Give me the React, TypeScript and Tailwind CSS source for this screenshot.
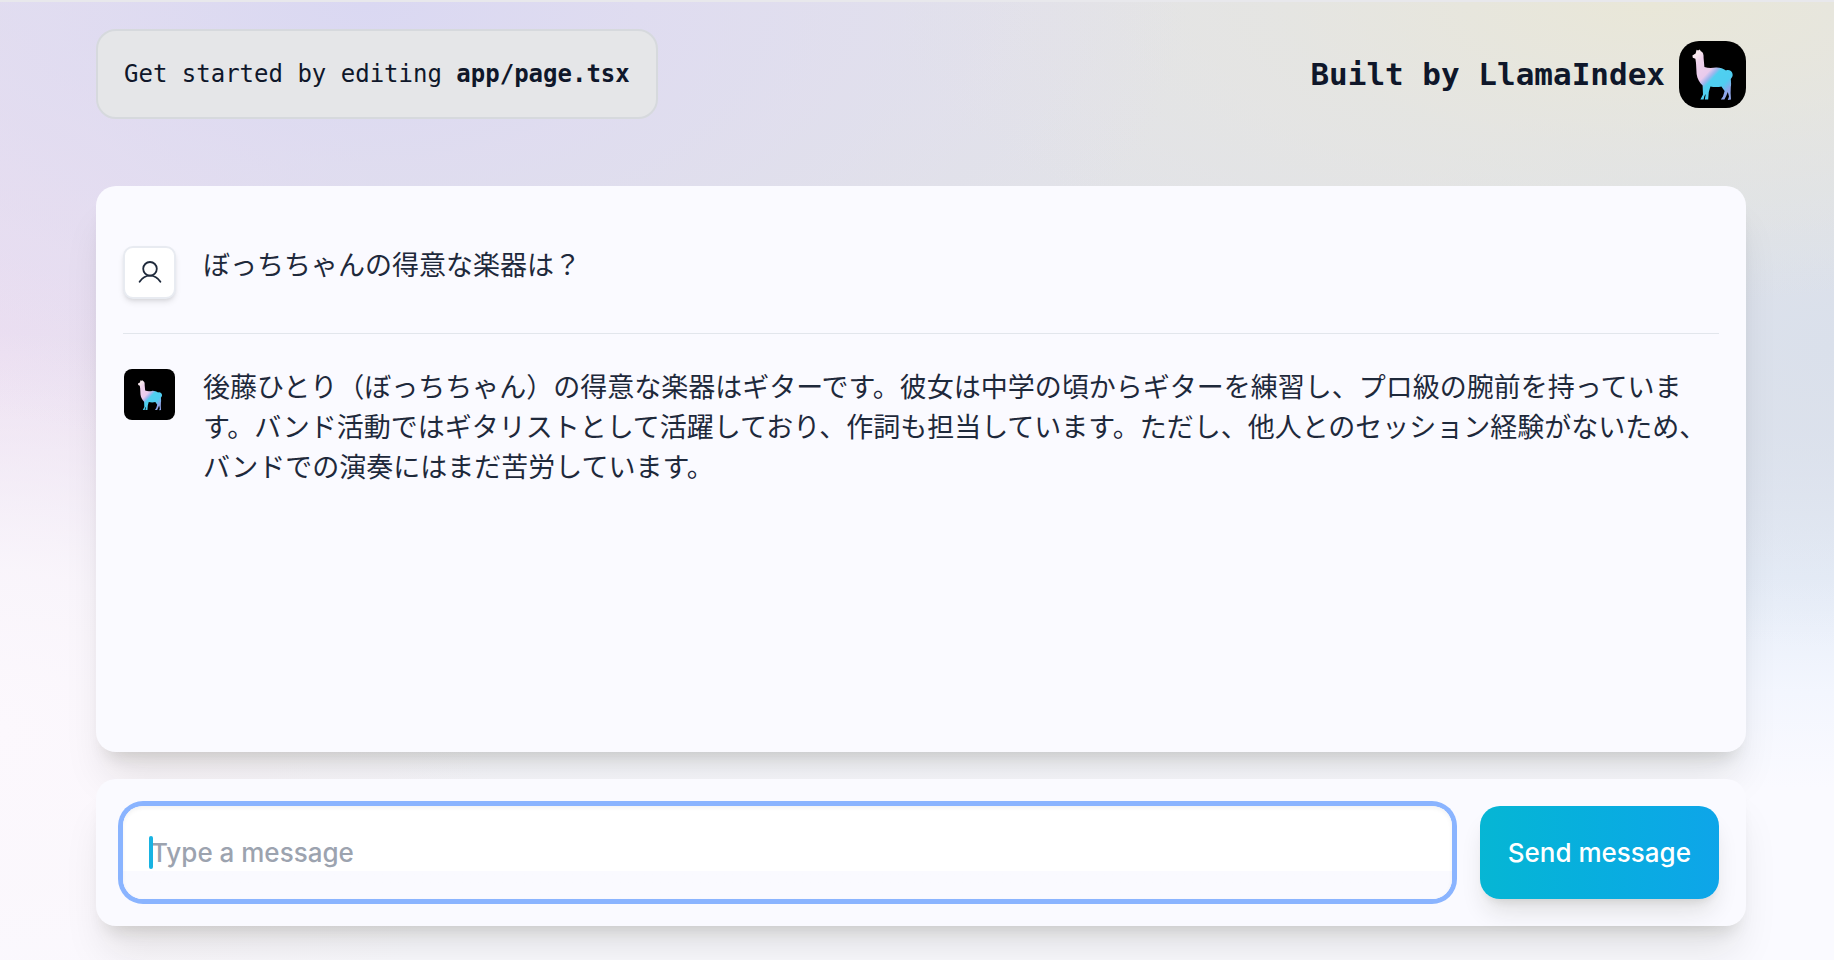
import React from "react";

function Llama({ className }: { className?: string }) {
  const id = React.useId();
  return (
    <svg viewBox="0 0 67 67" className={className} role="img" aria-label="Llama Logo">
      <defs>
        <linearGradient id={id} x1="20" y1="12" x2="54" y2="44" gradientUnits="userSpaceOnUse">
          <stop offset="0" stopColor="#f8e8ee" />
          <stop offset="0.12" stopColor="#efd2ec" />
          <stop offset="0.42" stopColor="#e9caec" />
          <stop offset="0.52" stopColor="#9db6ee" />
          <stop offset="0.59" stopColor="#4fd0f0" />
          <stop offset="0.84" stopColor="#4fcdf0" />
          <stop offset="1" stopColor="#8fa6ea" />
        </linearGradient>
      </defs>
      <rect width="67" height="67" fill="#000" />
      <path
        fill={`url(#${id})`}
        d="M17.6 8.8 L19 9.600 L20.800 8.600 L21.800 10.200 C24 11 24.800 13 24.600 17 L25.400 26 C29 27.400 33 27.200 37 26.600 C41 26.400 44 27.800 47 29.400 C50 28.200 53 30 53.600 33 C54 35.500 52.600 36.500 51.800 38 C52 41 52.400 43.500 51.800 46 L51.600 52 L52 58.600 L48.800 59 L50 55.600 L48.800 51 L47.200 55 L45.400 58.600 L41.800 58.600 L44 55.400 L45.600 50 L42.400 45.400 C39 46.200 34.500 46 31.400 45.400 L29.800 51 L29.200 58.600 L25.800 58.600 L26.800 53 L25.400 55 L24.600 58.600 L21.400 58.600 L24 53.600 L23.600 44.600 C20.600 41.400 18.200 38 17.600 33 L17 22 L16.400 17.800 L13.800 16.800 L13.400 14.400 L16.600 12.400 Z"
      />
    </svg>
  );
}

function UserIcon() {
  return (
    <svg viewBox="0 0 24 24" className="h-6 w-6" fill="none" stroke="#1e293b" strokeWidth="1.8" strokeLinecap="round" aria-hidden="true">
      <circle cx="12" cy="7.8" r="6.8" />
      <path d="M1.600 20.800c2.400-3.800 6-6.200 10.400-6.200s8 2.400 10.400 6.200" />
    </svg>
  );
}

function Header() {
  return (
    <header className="flex items-center justify-between">
      <p className="rounded-[20px] border-2 border-[#d6d9dd] bg-[#e5e6e8] px-[26px] py-[26px] text-[24px] leading-[34px]">
        Get started by editing&nbsp;<code className="font-[inherit] font-bold">app/page.tsx</code>
      </p>
      <a href="#" className="flex items-center gap-[14px] text-[31px] leading-[40px] font-bold">
        <span>Built by LlamaIndex</span>
        <Llama className="h-[67px] w-[67px] rounded-[20px]" />
      </a>
    </header>
  );
}

function Message({ role, children }: { role: "user" | "assistant"; children: React.ReactNode }) {
  return (
    <div className="flex items-start gap-[27px] py-[34px]">
      {role === "user" ? (
        <div className="flex h-[53px] w-[53px] shrink-0 items-center justify-center rounded-[10px] border-2 border-[#e8ebf1] bg-white shadow-md">
          <UserIcon />
        </div>
      ) : (
        <div className="flex h-[53px] w-[53px] shrink-0 items-center justify-center">
          <div className="flex h-[51px] w-[51px] items-center justify-center rounded-[8px] bg-black">
            <Llama className="h-10 w-10" />
          </div>
        </div>
      )}
      <p className="flex-1 text-[27px] leading-[40px]">{children}</p>
    </div>
  );
}

export default function App() {
  return (
    <main
      className="min-h-screen overflow-hidden border-t-2 border-[#e8e8ec] bg-[#fafaff] bg-[radial-gradient(ellipse_820px_460px_at_20%_0%,#dad8f2_0%,#dedaf2c0_35%,#e2e0ee00_100%),radial-gradient(ellipse_760px_300px_at_90%_0%,#e9e7d8_0%,#e6e6dea0_50%,#e3e4e500_100%),radial-gradient(ellipse_500px_400px_at_0%_76%,#fcf8fd_0%,#fbf7fce0_40%,#f6e9f800_100%),radial-gradient(ellipse_400px_480px_at_0%_36%,#eddff1_0%,#eddff1c0_40%,#eadcf100_100%),radial-gradient(ellipse_500px_300px_at_100%_36%,#dae0eb_0%,#dae0eb00_100%),linear-gradient(to_bottom,#e3e3ea_0%,#e2e3e8_20%,#dfe4ee_45%,#e6edf8_60%,#f3f6fe_72%,#fafaff_82%)] pt-[27px] pr-[88px] pb-[34px] pl-24 font-['Inter','Noto_Sans_CJK_JP',sans-serif] text-[#1e293b]"
    >
      <div className="font-['DejaVu_Sans_Mono',monospace] text-[#0f172a]">
        <Header />
      </div>
      <section aria-label="Conversation" className="mt-[67px] min-h-[566px] rounded-[20px] bg-[#fafaff] px-[27px] pt-[26px] pb-7 shadow-[0_34px_42px_-9px_rgb(30_30_0/0.1),0_14px_17px_-10px_rgb(30_30_0/0.14)]">
        <div className="divide-y divide-[#e2e6ec]">
          <Message role="user">ぼっちちゃんの得意な楽器は？</Message>
          <Message role="assistant">
            後藤ひとり（ぼっちちゃん）の得意な楽器はギターです。彼女は中学の頃からギターを練習し、プロ級の腕前を持っています。バンド活動ではギタリストとして活躍しており、作詞も担当しています。ただし、他人とのセッション経験がないため、バンドでの演奏にはまだ苦労しています。
          </Message>
        </div>
      </section>
      <form onSubmit={(e) => e.preventDefault()} className="mt-[27px] flex gap-7 rounded-[20px] bg-[#fafaff] p-[27px] shadow-[0_34px_42px_-9px_rgb(30_30_0/0.1),0_14px_17px_-10px_rgb(30_30_0/0.14)]">
        <div className="relative flex min-w-0 flex-1">
          <input
            autoFocus
            aria-label="Message"
            placeholder="Type a message"
            className="h-[93px] min-w-0 flex-1 rounded-[20px] bg-linear-to-b from-white from-70% to-[#fafaff] to-70% px-7 text-[26px] font-medium caret-transparent inset-shadow-sm ring-5 ring-[#8ab4ff] outline-none placeholder:text-[#9ca3af]"
          />
          <span aria-hidden="true" className="absolute top-[30px] left-[26px] h-[33px] w-[4px] rounded-full bg-[#18b3e2]" />
        </div>
        <button type="submit" className="rounded-[20px] bg-linear-to-r from-[#06b6d4] to-[#0ea5e9] px-7 text-[26px] font-medium text-white shadow-[0_17px_25px_-5px_rgb(30_30_0/0.12),0_7px_10px_-6px_rgb(30_30_0/0.12)]">
          Send message
        </button>
      </form>
    </main>
  );
}
